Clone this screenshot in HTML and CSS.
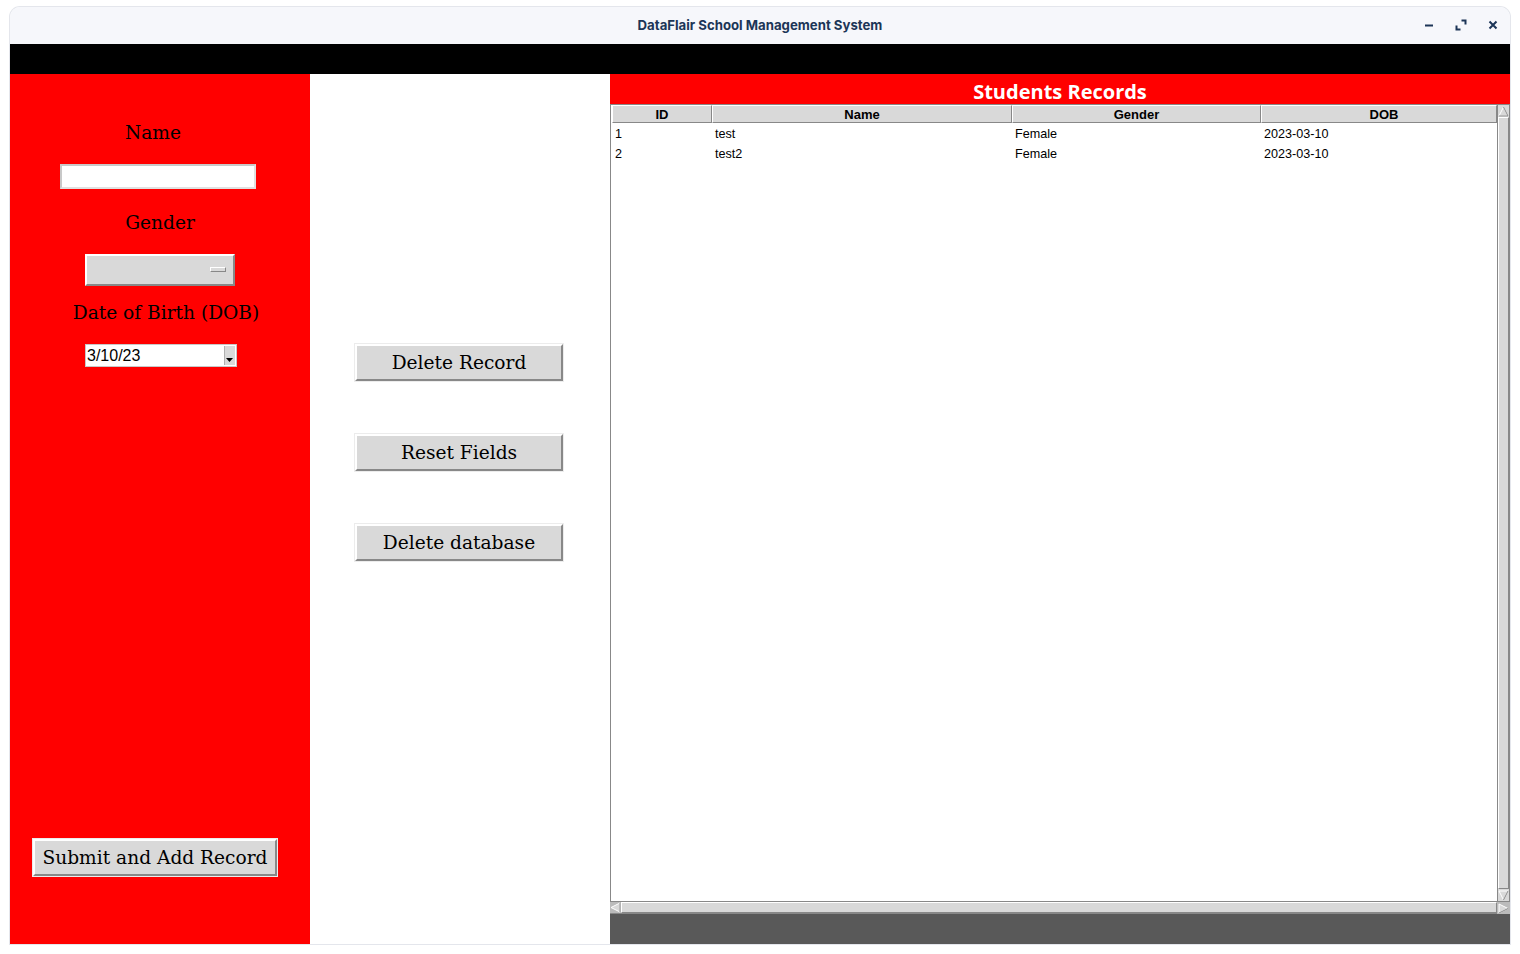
FILE: index.html
```html
<!DOCTYPE html>
<html>
<head>
<meta charset="utf-8">
<link rel="stylesheet" href="styles.css">
</head>
<body>
<div class="window">
  <div class="titlebar">
    <div class="title">DataFlair School Management System</div>
    <div class="controls">
      <svg class="ctl" width="12" height="12" viewBox="0 0 12 12"><path d="M2 6.5h8" stroke="#1c3557" stroke-width="2"/></svg>
      <svg class="ctl" width="12" height="12" viewBox="0 0 12 12"><path d="M6.5 1.5h4v4M1.5 6.5v4h4" fill="none" stroke="#1c3557" stroke-width="2"/></svg>
      <svg class="ctl" width="12" height="12" viewBox="0 0 12 12"><path d="M2.5 2.5l7 7M9.5 2.5l-7 7" stroke="#1c3557" stroke-width="2"/></svg>
    </div>
  </div>
  <div class="blackbar"></div>
  <div class="content">
    <div class="left">
      <div class="label l-name">Name</div>
      <div class="entry"></div>
      <div class="label l-gender">Gender</div>
      <div class="combo"><span class="combo-ind"></span></div>
      <div class="label l-dob">Date of Birth (DOB)</div>
      <div class="date"><span class="date-text">3/10/23</span><span class="date-btn"><svg width="8" height="5" viewBox="0 0 8 5"><path d="M0 0h7l-3.5 4z" fill="#000"/></svg></span></div>
      <div class="btn submit">Submit and Add Record</div>
    </div>
    <div class="middle">
      <div class="btn mbtn first">Delete Record</div>
      <div class="btn mbtn">Reset Fields</div>
      <div class="btn mbtn">Delete database</div>
    </div>
    <div class="right">
      <div class="rhead">Students Records</div>
      <div class="tree">
        <div class="tree-main">
          <div class="thead">
            <div class="th c1">ID</div>
            <div class="th c2">Name</div>
            <div class="th c3">Gender</div>
            <div class="th c4 h4">DOB</div>
          </div>
          <div class="tr">
            <div class="td c1">1</div>
            <div class="td c2">test</div>
            <div class="td c3">Female</div>
            <div class="td c4">2023-03-10</div>
          </div>
          <div class="tr">
            <div class="td c1">2</div>
            <div class="td c2">test2</div>
            <div class="td c3">Female</div>
            <div class="td c4">2023-03-10</div>
          </div>
        </div>
        <div class="vscroll">
          <div class="arrow"><svg width="11" height="11" viewBox="0 0 11 11"><path d="M5.5 1L10 10H1z" fill="#d9d9d9" stroke="#fff" stroke-width="1"/><path d="M10 10H1M5.5 1L10 10" stroke="#888" stroke-width="1"/></svg></div>
          <div class="vthumb"></div>
          <div class="arrow"><svg width="11" height="11" viewBox="0 0 11 11"><path d="M1 1h9L5.5 10z" fill="#d9d9d9" stroke="#fff" stroke-width="1"/><path d="M10 1L5.5 10" stroke="#888" stroke-width="1"/></svg></div>
        </div>
        <div class="hscroll">
          <div class="arrow"><svg width="11" height="11" viewBox="0 0 11 11"><path d="M1 5.5L10 1v9z" fill="#d9d9d9" stroke="#fff" stroke-width="1"/><path d="M10 1v9" stroke="#888" stroke-width="1"/></svg></div>
          <div class="hthumb"></div>
        </div>
        <div class="corner"><svg width="11" height="11" viewBox="0 0 11 11"><path d="M10 5.5L1 1v9z" fill="#d9d9d9" stroke="#fff" stroke-width="1"/><path d="M10 5.5L1 10" stroke="#888" stroke-width="1"/></svg></div>
      </div>
      <div class="rfoot"></div>
    </div>
  </div>
</div>
</body>
</html>
```
FILE: styles.css
```css
html, body {
  margin: 0;
  padding: 0;
  background: #ffffff;
}
body {
  width: 1520px;
  height: 954px;
  overflow: hidden;
}
.window {
  margin: 7px 10px 0 10px;
  width: 1500px;
  height: 937px;
  display: flex;
  flex-direction: column;
  border-radius: 10px 10px 0 0;
  overflow: hidden;
  box-shadow: 0 0 0 1px #e4e6ec;
}
.titlebar {
  height: 37px;
  flex: none;
  background: #f6f7fb;
  display: flex;
  align-items: center;
  justify-content: center;
  position: relative;
}
.title {
  font-family: Inter, "Liberation Sans", sans-serif;
  font-weight: 700;
  font-size: 13.2px;
  color: #1c3557;
  margin-top: -1px;
}
.controls {
  position: absolute;
  right: 11px;
  top: 12px;
  display: flex;
  gap: 20px;
}
.ctl { display: block; }
.blackbar {
  height: 30px;
  flex: none;
  background: #000;
}
.content {
  flex: 1;
  display: flex;
  min-height: 0;
}
.left {
  width: 300px;
  background: #ff0000;
  display: flex;
  flex-direction: column;
  align-items: flex-start;
}
.label {
  font-family: "DejaVu Serif", serif;
  font-size: 18.6px;
  line-height: 24px;
  color: #000;
  width: 200px;
  text-align: center;
}
.l-name { margin: 47px 0 0 43px; }
.l-gender { margin: 22px 0 0 50px; }
.l-dob { margin: 15px 0 0 50px; width: 212px; }
.entry {
  margin: 19px 0 0 50px;
  width: 192px;
  height: 21px;
  background: #fff;
  border: 2px solid #c8c8c8;
  border-bottom-color: #e0e0e0;
  border-right-color: #e0e0e0;
}
.combo {
  margin: 19px 0 0 75px;
  width: 146px;
  height: 28px;
  background: #d9d9d9;
  border: 2px solid;
  border-color: #ffffff #888888 #888888 #ffffff;
  position: relative;
}
.combo-ind {
  position: absolute;
  left: 123px;
  top: 11px;
  width: 14px;
  height: 3px;
  background: #d9d9d9;
  border: 1px solid;
  border-color: #ffffff #888888 #888888 #ffffff;
}
.date {
  margin: 19px 0 0 75px;
  width: 150px;
  height: 21px;
  background: #fff;
  border: 1px solid #c8c8c8;
  display: flex;
  align-items: center;
}
.date-text {
  flex: 1;
  font-family: "Liberation Sans", Arial, sans-serif;
  font-size: 16px;
  color: #000;
  padding-left: 1px;
}
.date-btn {
  width: 11px;
  height: 19px;
  background: #d9d9d9;
  border-left: 1px solid #b0b0b0;
  display: flex;
  align-items: flex-end;
  justify-content: center;
  padding-bottom: 2px;
  box-sizing: border-box;
  margin-right: 1px;
}
.date-btn svg { display: block; }
.btn {
  font-family: "DejaVu Serif", serif;
  font-size: 18.6px;
  color: #000;
  background: #d9d9d9;
  border: 2px solid;
  border-color: #ffffff #888888 #888888 #ffffff;
  box-shadow: 0 0 0 1px #ececec;
  box-sizing: border-box;
  display: flex;
  align-items: center;
  justify-content: center;
}
.submit {
  margin: auto 0 68px 23px;
  width: 244px;
  height: 37px;
}
.middle {
  width: 300px;
  background: #ffffff;
  display: flex;
  flex-direction: column;
  align-items: flex-start;
}
.mbtn {
  margin: 53px 0 0 45px;
  width: 208px;
  height: 37px;
}
.mbtn.first { margin-top: 270px; }
.right {
  width: 900px;
  display: flex;
  flex-direction: column;
}
.rhead {
  height: 30px;
  background: #ff0000;
  color: #fff;
  font-family: "Open Sans", "Noto Sans", sans-serif;
  font-weight: 700;
  font-size: 20px;
  line-height: 24px;
  padding-top: 6px;
  box-sizing: border-box;
  text-align: center;
}
.tree {
  flex: 1;
  display: grid;
  grid-template-columns: 887px 13px;
  grid-template-rows: 797px 13px;
  background: #fff;
}
.tree-main {
  border-left: 1px solid #888;
  border-top: 1px solid #888;
  background: #fff;
}
.thead {
  display: flex;
  height: 18px;
  margin-left: 1px;
}
.th {
  background: #d9d9d9;
  border: 1px solid;
  border-color: #ffffff #888888 #888888 #ffffff;
  box-sizing: border-box;
  font-family: "Liberation Sans", Arial, sans-serif;
  font-weight: 700;
  font-size: 13px;
  line-height: 18px;
  text-align: center;
  color: #000;
}
.h4 { padding-left: 10px; }
.tr {
  display: flex;
  height: 20px;
  align-items: center;
  margin-left: 1px;
}
.td {
  font-family: "Liberation Sans", Arial, sans-serif;
  font-size: 12.6px;
  color: #000;
  padding-left: 3px;
  box-sizing: border-box;
  margin-top: 1px;
}
.c1 { width: 100px; }
.c2 { width: 300px; }
.c3 { width: 249px; }
.c4 { width: 236px; }
.vscroll {
  background: #d9d9d9;
  border-left: 1px solid #888;
  border-right: 1px solid #888;
  box-sizing: border-box;
  display: flex;
  flex-direction: column;
  border-top: 1px solid #888;
}
.vscroll .arrow, .hscroll .arrow, .corner {
  width: 11px;
  height: 12px;
  flex: none;
  display: flex;
  align-items: center;
  justify-content: center;
}
.vthumb {
  flex: 1;
  background: #d9d9d9;
  border: 1px solid;
  border-color: #ffffff #888888 #888888 #ffffff;
}
.hscroll {
  background: #d9d9d9;
  border-top: 1px solid #888;
  border-bottom: 1px solid #888;
  box-sizing: border-box;
  display: flex;
}
.hscroll .arrow { height: 11px; background: #bbbbbb; }
.hthumb {
  flex: 1;
  background: #d9d9d9;
  border: 1px solid;
  border-color: #ffffff #888888 #888888 #ffffff;
}
.corner {
  background: #bbbbbb;
  width: 13px;
  height: 13px;
  border-top: 1px solid #888;
  box-sizing: border-box;
}
.rfoot {
  height: 30px;
  flex: none;
  background: #595959;
}
```
